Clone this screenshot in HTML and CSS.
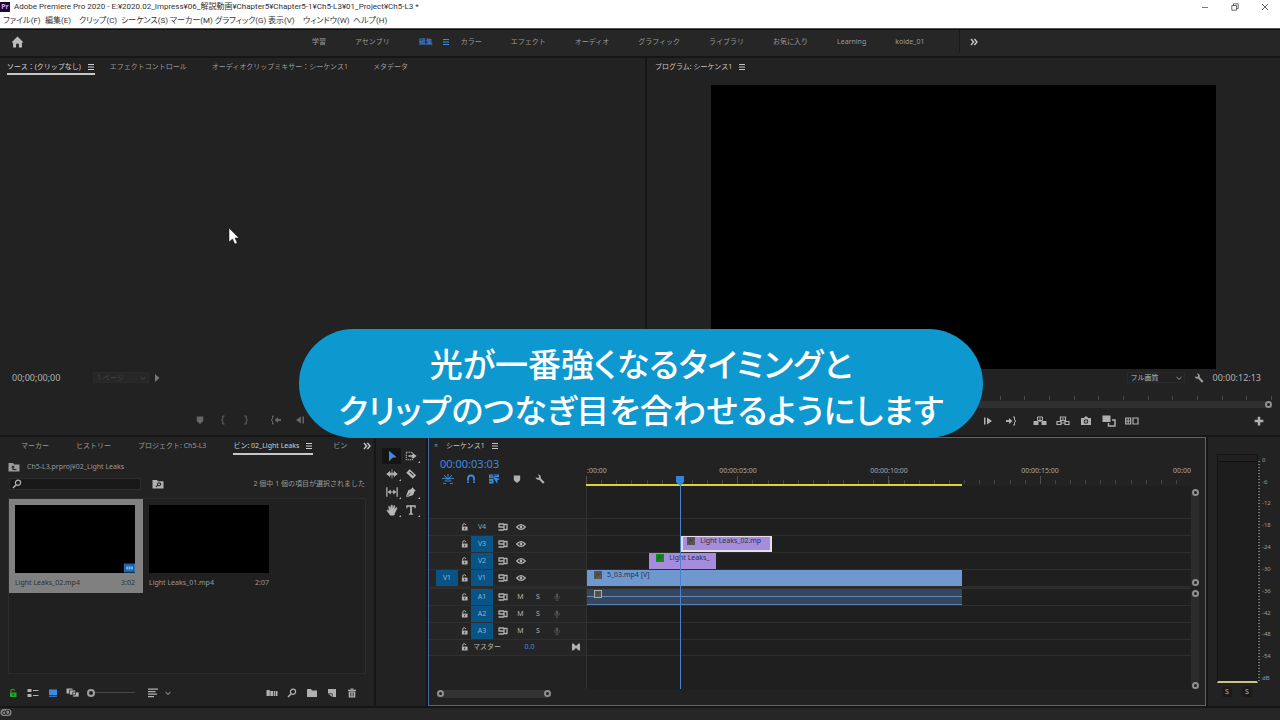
FILE: index.html
```html
<!DOCTYPE html>
<html lang="ja">
<head>
<meta charset="utf-8">
<title>Adobe Premiere Pro 2020</title>
<link rel="stylesheet" href="styles.css">
</head>
<body>
<svg class="sprite" aria-hidden="true">
  <symbol id="menu" viewBox="0 0 8 8"><path d="M1 1.500h6M1 4h6M1 6.500h6" stroke="currentColor" stroke-width="1.100"/></symbol>
  <symbol id="more" viewBox="0 0 8 8"><path d="M1 1l2.600 3L1 7M4.400 1L7 4 4.400 7" fill="none" stroke="currentColor" stroke-width="1.400"/></symbol>
  <symbol id="chevron" viewBox="0 0 8 8"><path d="M1.500 3L4 5.400 6.500 3" fill="none" stroke="currentColor"/></symbol>
  <symbol id="home" viewBox="0 0 14 12"><path d="M7 0L0.500 6.500h1.700V12h3.300V8h3v4h3.300V6.500h1.700z" fill="currentColor"/></symbol>
  <symbol id="wrench" viewBox="0 0 12 12"><path d="M.8 3.800a3.400 3.400 0 0 0 4.200 3l4.600 4.900 1.900-1.900-4.700-4.600A3.400 3.400 0 0 0 3.200.6l1.700 2.200-.3 1.500-1.600.4z" fill="currentColor"/></symbol>
  <symbol id="marker" viewBox="0 0 10 10"><path d="M1.800 1.500h6.400v4.700L5 9 1.800 6.200z" fill="currentColor"/></symbol>
  <symbol id="brace-l" viewBox="0 0 10 10"><path d="M6.500 1H4.800v3L3.300 5l1.500 1v3h1.700" fill="none" stroke="currentColor"/></symbol>
  <symbol id="brace-r" viewBox="0 0 10 10"><path d="M3.500 1h1.700v3l1.500 1-1.500 1v3H3.500" fill="none" stroke="currentColor"/></symbol>
  <symbol id="goto-in" viewBox="0 0 12 10"><path d="M4 1H2.500v3L1 5l1.500 1v3H4" fill="none" stroke="currentColor"/><path d="M4.500 5L8 2v2h3v2H8v2z" fill="currentColor"/></symbol>
  <symbol id="goto-out" viewBox="0 0 12 10"><path d="M8 1h1.500v3L11 5 9.500 6v3H8" fill="none" stroke="currentColor"/><path d="M7.500 5L4 2v2H1v2h3v2z" fill="currentColor"/></symbol>
  <symbol id="step-back" viewBox="0 0 10 10"><path d="M1 5l5-3.500v7zM7.500 1.500H9v7H7.500z" fill="currentColor"/></symbol>
  <symbol id="step-fwd" viewBox="0 0 10 10"><path d="M9 5L4 1.500v7zM1 1.500h1.500v7H1z" fill="currentColor"/></symbol>
  <symbol id="lift" viewBox="0 0 14 10"><path d="M.5 5h5v4h-5zM8.500 5h5v4h-5z" fill="currentColor"/><path d="M4.500 1h5v3.500h-5z" fill="none" stroke="currentColor"/><path d="M7 2v4M5.500 5h3" stroke="currentColor"/></symbol>
  <symbol id="extract" viewBox="0 0 14 10"><path d="M1 5.500h4v3H1zM9 5.500h4v3H9zM4.500 1h5v3.500h-5z" fill="none" stroke="currentColor" stroke-width="1.200"/><path d="M5 7h4M7 2v3" stroke="currentColor"/></symbol>
  <symbol id="camera" viewBox="0 0 12 10"><path fill-rule="evenodd" d="M1 2h3l1-1.500h2L8 2h3v7H1zM6 3.200a2.300 2.300 0 1 0 0 4.600 2.300 2.300 0 0 0 0-4.600z" fill="currentColor"/><circle cx="6" cy="5.500" r="1.200" fill="currentColor"/></symbol>
  <symbol id="compare" viewBox="0 0 14 12"><path d="M.5.500h8v6.500h-8z" fill="currentColor"/><path d="M6.500 8v3H13V5h-3" fill="none" stroke="currentColor" stroke-width="1.500"/></symbol>
  <symbol id="proxy" viewBox="0 0 14 8"><path d="M.7 1h5v6h-5zM8 1h5v6H8z" fill="none" stroke="currentColor" stroke-width="1.200"/><path d="M3.200 1v6M.7 4h5" stroke="currentColor"/></symbol>
  <symbol id="plus" viewBox="0 0 8 8"><path d="M4 .5v7M.5 4h7" stroke="currentColor" stroke-width="2"/></symbol>
  <symbol id="folder" viewBox="0 0 12 10"><path d="M1 1h4l1 1.500h5V9H1z" fill="currentColor"/></symbol>
  <symbol id="folder-up" viewBox="0 0 12 10"><path fill-rule="evenodd" d="M.5 1h4.500l1 1.500h5.500V9.500H.5zM5 3.500L3 5.500h1.400v2.500h4V7H5.600V5.500H7z" fill="currentColor"/></symbol>
  <symbol id="folder-find" viewBox="0 0 12 10"><path fill-rule="evenodd" d="M.5 1h4.500l1 1.200h5.500V9.500H.5zM7 3.200a2 2 0 0 0-1.800 2.700L3.500 7.600l.8.700L6 6.800a2 2 0 1 0 1-3.600zM7 4.200a1 1 0 1 1 0 2 1 1 0 0 1 0-2z" fill="currentColor"/></symbol>
  <symbol id="search" viewBox="0 0 10 10"><circle cx="6" cy="3.800" r="2.600" fill="none" stroke="currentColor" stroke-width="1.200"/><path d="M4.200 5.700L1 9" stroke="currentColor" stroke-width="1.500"/></symbol>
  <symbol id="lock" viewBox="0 0 8 9"><path d="M1 4h6.500v4.500H1z" fill="currentColor"/><path d="M2 4V2.200q0-1.400 1.700-1.400T5.500 2.200" fill="none" stroke="currentColor" stroke-width="1.100"/><path d="M4.200 5.200v2" stroke="#222"/></symbol>
  <symbol id="list" viewBox="0 0 12 10"><path d="M.5 1h4v3h-4zM.5 6h4v3h-4z" fill="currentColor"/><path d="M6 2.500h5.500M6 7.500h5.500" stroke="currentColor"/></symbol>
  <symbol id="iconview" viewBox="0 0 10 10"><path d="M1 1.500h8v5.500H1zM1 7.800h8v.9H1z" fill="currentColor"/></symbol>
  <symbol id="freeform" viewBox="0 0 14 10"><path d="M.5.500h6v5h-6z" fill="currentColor"/><path d="M3.500 2h6v5h-6zM6.800 4H13v5H6.800z" fill="currentColor" stroke="#222" stroke-width=".7"/></symbol>
  <symbol id="sort" viewBox="0 0 12 10"><path d="M1 1.200h10M1 3.700h7.500M1 6.200h9M1 8.700h6" stroke="currentColor" stroke-width="1.300"/></symbol>
  <symbol id="automate" viewBox="0 0 12 8"><path d="M.5 1h3.300v6H.5zM4.300 2h3v5h-3zM8 2h1.400v5H8zM10 2h1.500v5H10z" fill="currentColor"/></symbol>
  <symbol id="newitem" viewBox="0 0 10 10"><path d="M1 1h8v8H5.500V5.500H1z" fill="currentColor"/><path d="M1.800 6.200h3v2.600z" fill="currentColor"/></symbol>
  <symbol id="trash" viewBox="0 0 10 10"><path d="M1 1.800h8v1.200H1zM3.500.5h3v1h-3z" fill="currentColor"/><path d="M1.700 3.500h6.600v6H1.700z" fill="currentColor"/><path d="M3.500 4.500v4M5 4.500v4M6.500 4.500v4" stroke="#222" stroke-width=".6"/></symbol>
  <symbol id="t-select" viewBox="0 0 14 14"><path d="M3.500 1l9 7.500-5 .5-4 4.500z" fill="currentColor"/></symbol>
  <symbol id="t-track" viewBox="0 0 14 14"><path d="M1.500 2.500h7v9h-7z" fill="none" stroke="currentColor" stroke-width="1.200" stroke-dasharray="1.500 1"/><path d="M4 6h5V3.500L13.500 7 9 10.500V8H4z" fill="currentColor"/></symbol>
  <symbol id="t-ripple" viewBox="0 0 14 14"><path d="M7 1.500v11M.8 7L4.500 4v2h5V4l3.700 3-3.700 3V8h-5v2z" fill="currentColor" stroke="currentColor" stroke-width=".8"/></symbol>
  <symbol id="t-razor" viewBox="0 0 14 14"><path fill-rule="evenodd" d="M5.500 1.500L13 8.500 9 12.500 1.500 5.500zM5 5l4.500 4 .8-.8L5.800 4.200z" fill="currentColor"/></symbol>
  <symbol id="t-slip" viewBox="0 0 14 14"><path d="M1 1.500v11M13 1.500v11M3 7h8" stroke="currentColor" stroke-width="1.400"/><path d="M2 7l3.500-3v6zM12 7L8.500 4v6z" fill="currentColor"/></symbol>
  <symbol id="t-pen" viewBox="0 0 14 14"><path d="M8.500 1.500l4 4-1.500 1-1.500 4L2 13l-.8-1L3.800 5l3.500-1.500z" fill="currentColor"/><path d="M2 12.500L6.500 8" stroke="#222" stroke-width=".9"/></symbol>
  <symbol id="t-hand" viewBox="0 0 14 14"><path d="M5 13L1 7.500q.5-1 1.500-.3L4 8.500 3 3q1-1 1.500.2L5.500 6 6 1.500q1-1 1.500.1L7.700 6l1.500-4q1-.7 1.300.4L9.700 6.500 12 4.200q1-.2.9.7L10.500 10 9.500 13z" fill="currentColor" stroke="currentColor" stroke-width=".6"/></symbol>
  <symbol id="t-type" viewBox="0 0 14 14"><path d="M1.500 1.500h11v3.500h-1.400V3.300H8V11h1.500v1.500h-5V11H6V3.300H2.900V5H1.500z" fill="currentColor"/></symbol>
  <symbol id="nest" viewBox="0 0 12 10"><path d="M6 0v3M2 1l2.500 3M10 1L7.500 4M0 4.500h12M2.500 7h7M1 9.500h3M8 9.500h3M4 2.500l4 4M8 2.500l-4 4" stroke="currentColor" stroke-width=".9"/></symbol>
  <symbol id="magnet" viewBox="0 0 10 10"><path d="M2 9V4.500q0-3 3-3t3 3V9" fill="none" stroke="currentColor" stroke-width="1.800"/><path d="M.8 7h2.600M6.600 7h2.600" stroke="#222" stroke-width=".7"/></symbol>
  <symbol id="linked" viewBox="0 0 12 10"><path d="M1 .5h4.500v3.700H1zM6 .5h5v2.800H6zM1 5h4.500v4.500H1z" fill="currentColor"/><path d="M5 3l7 2-2.700 1.200V10z" fill="currentColor"/><path d="M1 7.300h3M2 2.300l7-1" stroke="#222" stroke-width=".6"/></symbol>
  <symbol id="sync" viewBox="0 0 10 8"><path d="M.5 1h5.500M.5 4h5.500M.5 7h5.500M1 1v3M6 1v6" stroke="currentColor" stroke-width="1.300" fill="none"/><path d="M6 1.500h3v5H6" fill="none" stroke="currentColor" stroke-width="1.300"/></symbol>
  <symbol id="eye" viewBox="0 0 10 8"><path d="M.7 4Q5-.8 9.300 4 5 8.800.7 4z" fill="none" stroke="currentColor" stroke-width="1.300"/><circle cx="5" cy="4" r="1.400" fill="currentColor"/></symbol>
  <symbol id="mic" viewBox="0 0 8 10"><rect x="2.500" y=".5" width="3" height="5.500" rx="1.500" fill="currentColor"/><path d="M1 4v1q0 2.500 3 2.500T7 5V4M4 7.500v2M2.500 9.500h3" fill="none" stroke="currentColor"/></symbol>
  <symbol id="bow" viewBox="0 0 8 8"><path d="M0 .5h1.300L4 3l2.700-2.500H8v7H6.700L4 5 1.300 7.500H0z" fill="currentColor"/></symbol>
  <symbol id="fx" viewBox="0 0 8 8"><path d="M0 0h8v8H0z" fill="currentColor"/><path d="M1.500 6.500l2-5 1 3 2-3" fill="none" stroke="#292e33" stroke-width=".8" opacity=".65"/></symbol>
  <symbol id="cloud" viewBox="0 0 12 8"><rect x=".5" y=".5" width="11" height="7" rx="3.500" fill="#888"/><circle cx="4.300" cy="4.300" r="1.800" fill="none" stroke="#222"/><circle cx="7.700" cy="3.700" r="2.200" fill="none" stroke="#222"/></symbol>
</svg>

<div class="app">
  <header class="window-head">
    <div class="titlebar">
      <span class="logo">Pr</span>
      <h1>Adobe Premiere Pro 2020 - E:¥2020.02_Impress¥06_解説動画¥Chapter5¥Chapter5-1¥Ch5-L3¥01_Project¥Ch5-L3 *</h1>
      <div class="window-buttons">
        <button aria-label="最小化"><svg viewBox="0 0 8 8"><path d="M1 4.500h6" stroke="#555" stroke-width=".8"/></svg></button>
        <button aria-label="元に戻す"><svg viewBox="0 0 8 8"><path d="M.8 2.500h4.700v4.700H.8zM2.500 2.500V.8h4.700v4.700H5.500" fill="none" stroke="#444" stroke-width=".8"/></svg></button>
        <button aria-label="閉じる"><svg viewBox="0 0 8 8"><path d="M1 1l6 6M7 1L1 7" stroke="#444" stroke-width=".8"/></svg></button>
      </div>
    </div>
    <nav class="menubar">
      <button>ファイル(F)</button><button>編集(E)</button><button>クリップ(C)</button><button>シーケンス(S)</button><button>マーカー(M)</button><button>グラフィック(G)</button><button>表示(V)</button><button>ウィンドウ(W)</button><button>ヘルプ(H)</button>
    </nav>
  </header>

  <nav class="workspaces">
    <button class="home" aria-label="ホーム"><svg><use href="#home"/></svg></button>
    <div class="workspace-list">
      <button>学習</button><button>アセンブリ</button>
      <button class="current">編集<svg class="i8"><use href="#menu"/></svg></button>
      <button>カラー</button><button>エフェクト</button><button>オーディオ</button><button>グラフィック</button><button>ライブラリ</button><button>お気に入り</button><button>Learning</button><button>koide_01</button>
    </div>
    <button class="overflow" aria-label="その他"><svg class="i8"><use href="#more"/></svg></button>
  </nav>

  <main class="upper">
    <section class="panel source">
      <div class="tabs source-tabs">
        <button class="tab active">ソース：(クリップなし)<svg class="i8"><use href="#menu"/></svg></button>
        <button class="tab">エフェクトコントロール</button>
        <button class="tab">オーディオクリップミキサー：シーケンス1</button>
        <button class="tab">メタデータ</button>
      </div>
      <div class="source-view"></div>
      <div class="monitor-info">
        <span class="timecode">00;00;00;00</span>
        <span class="select dim"><select aria-label="ページ" disabled><option>1 ページ</option></select><svg class="i8"><use href="#chevron"/></svg></span>
        <button class="next" aria-label="次のページ"><svg class="i8" viewBox="0 0 8 8"><path d="M2 0l4.500 4L2 8z" fill="#777"/></svg></button>
      </div>
      <div class="transport source-transport">
        <button aria-label="マーカーを追加"><svg class="i10"><use href="#marker"/></svg></button>
        <button aria-label="インをマーク"><svg class="i10"><use href="#brace-l"/></svg></button>
        <button aria-label="アウトをマーク"><svg class="i10"><use href="#brace-r"/></svg></button>
        <button class="wide" aria-label="インへ移動"><svg class="i12"><use href="#goto-in"/></svg></button>
        <button class="narrow" aria-label="前のフレーム"><svg class="i10"><use href="#step-back"/></svg></button>
      </div>
    </section>

    <section class="panel program">
      <div class="tabs program-tabs">
        <button class="tab lit">プログラム: シーケンス1<svg class="i8"><use href="#menu"/></svg></button>
      </div>
      <div class="screen"></div>
      <div class="monitor-info program-info">
        <span class="select"><select aria-label="再生時の解像度"><option>フル画質</option></select><svg class="i8"><use href="#chevron"/></svg></span>
        <button aria-label="設定"><svg class="i12"><use href="#wrench"/></svg></button>
        <span class="timecode">00:00:12:13</span>
      </div>
      <div class="mini-ruler"></div>
      <div class="mini-scroll"><span class="knob"></span></div>
      <div class="transport program-transport">
        <button aria-label="次のフレーム"><svg class="i10"><use href="#step-fwd"/></svg></button>
        <button aria-label="アウトへ移動"><svg class="i12"><use href="#goto-out"/></svg></button>
        <button class="spaced" aria-label="リフト"><svg class="i14"><use href="#lift"/></svg></button>
        <button aria-label="抽出"><svg class="i14"><use href="#extract"/></svg></button>
        <button aria-label="フレームを書き出し"><svg class="i12"><use href="#camera"/></svg></button>
        <button aria-label="比較表示"><svg class="i14"><use href="#compare"/></svg></button>
        <button aria-label="プロキシ"><svg class="i14"><use href="#proxy"/></svg></button>
        <button class="add" aria-label="ボタンエディター"><svg class="i10"><use href="#plus"/></svg></button>
      </div>
    </section>
  </main>

  <div class="lower">
    <section class="panel bin">
      <div class="tabs bin-tabs">
        <button class="tab">マーカー</button>
        <button class="tab">ヒストリー</button>
        <button class="tab">プロジェクト: Ch5-L3</button>
        <button class="tab active">ビン: 02_Light Leaks<svg class="i8"><use href="#menu"/></svg></button>
        <button class="tab last">ビン</button>
        <button class="overflow" aria-label="その他"><svg class="i8"><use href="#more"/></svg></button>
      </div>
      <div class="crumb"><svg class="i12"><use href="#folder-up"/></svg>Ch5-L3.prproj¥02_Light Leaks</div>
      <div class="search-row">
        <label class="search"><svg class="i10"><use href="#search"/></svg><input type="text" aria-label="ビンを検索"></label>
        <button aria-label="検索ビンを作成"><svg class="i12"><use href="#folder-find"/></svg></button>
        <span class="count">2 個中 1 個の項目が選択されました</span>
      </div>
      <div class="bin-list">
        <article class="card selected">
          <div class="thumb"><span class="badge"><svg viewBox="0 0 10 8"><path d="M0 0h10v8H0z" fill="#2e76bd"/><path d="M1.500 1v6M8.500 1v6M1 1h8M1 7h8" stroke="#174a80" stroke-width=".7"/><path d="M2 2.800h1.500v2.400H2zM4.300 2.800h1.500v2.400H4.300zM6.600 2.800h1.500v2.400H6.600z" fill="#7dbcf2"/></svg></span></div>
          <div class="caption"><span>Light Leaks_02.mp4</span><span>3:02</span></div>
        </article>
        <article class="card">
          <div class="thumb"></div>
          <div class="caption"><span>Light Leaks_01.mp4</span><span>2:07</span></div>
        </article>
      </div>
      <div class="bin-tools">
        <button class="green" aria-label="書き込み可能"><svg class="i10"><use href="#lock"/></svg></button>
        <button aria-label="リスト表示"><svg class="i12"><use href="#list"/></svg></button>
        <button class="blue" aria-label="アイコン表示"><svg class="i10"><use href="#iconview"/></svg></button>
        <button aria-label="フリーフォーム表示"><svg class="i14"><use href="#freeform"/></svg></button>
        <input type="range" min="0" max="100" value="0" aria-label="アイコンのサイズ">
        <button aria-label="並べ替え"><svg class="i12"><use href="#sort"/></svg></button>
        <button class="small" aria-label="並べ替えメニュー"><svg class="i8"><use href="#chevron"/></svg></button>
        <span class="fill"></span>
        <button aria-label="シーケンスへオート編成"><svg class="i12"><use href="#automate"/></svg></button>
        <button aria-label="検索"><svg class="i10"><use href="#search"/></svg></button>
        <button aria-label="新規ビン"><svg class="i12"><use href="#folder"/></svg></button>
        <button aria-label="新規項目"><svg class="i10"><use href="#newitem"/></svg></button>
        <button aria-label="消去"><svg class="i10"><use href="#trash"/></svg></button>
      </div>
    </section>

    <section class="panel tools">
      <button class="on" aria-label="選択ツール"><svg class="i14"><use href="#t-select"/></svg></button>
      <button class="multi" aria-label="トラックの前方選択ツール"><svg class="i14"><use href="#t-track"/></svg></button>
      <button class="multi" aria-label="リップルツール"><svg class="i14"><use href="#t-ripple"/></svg></button>
      <button aria-label="レーザーツール"><svg class="i14"><use href="#t-razor"/></svg></button>
      <button class="multi" aria-label="スリップツール"><svg class="i14"><use href="#t-slip"/></svg></button>
      <button class="multi" aria-label="ペンツール"><svg class="i14"><use href="#t-pen"/></svg></button>
      <button class="multi" aria-label="手のひらツール"><svg class="i14"><use href="#t-hand"/></svg></button>
      <button class="multi" aria-label="文字ツール"><svg class="i14"><use href="#t-type"/></svg></button>
    </section>

    <section class="panel timeline">
      <div class="tl-top">
        <div class="tl-head">
          <div class="seq-tab"><button class="close" aria-label="閉じる">×</button><button class="tab lit">シーケンス1<svg class="i8"><use href="#menu"/></svg></button></div>
          <div class="position">00:00:03:03</div>
          <div class="tl-options">
            <button class="blue" aria-label="ネスト"><svg class="i12"><use href="#nest"/></svg></button>
            <button class="blue" aria-label="スナップ"><svg class="i10"><use href="#magnet"/></svg></button>
            <button class="blue" aria-label="リンクされた選択"><svg class="i12"><use href="#linked"/></svg></button>
            <button aria-label="マーカーを追加"><svg class="i10"><use href="#marker"/></svg></button>
            <button aria-label="表示設定"><svg class="i12"><use href="#wrench"/></svg></button>
          </div>
        </div>
        <div class="ruler">
          <div class="ruler-labels"><span>:00:00</span><span>00:00:05:00</span><span>00:00:10:00</span><span>00:00:15:00</span><span>00:00</span></div>
          <div class="ticks"></div>
          <div class="render-bar"><span style="width:62.1%"></span></div>
        </div>
      </div>
      <div class="tl-body">
        <div class="tracks">
          <div class="track blank"><div class="track-head"></div><div class="lane"></div></div>
          <div class="track"><div class="track-head"><i></i><svg class="lk"><use href="#lock"/></svg><button class="target off">V4</button><svg class="i10"><use href="#sync"/></svg><svg class="i10"><use href="#eye"/></svg></div><div class="lane"></div></div>
          <div class="track"><div class="track-head"><i></i><svg class="lk"><use href="#lock"/></svg><button class="target">V3</button><svg class="i10"><use href="#sync"/></svg><svg class="i10"><use href="#eye"/></svg></div><div class="lane"><div class="clip violet picked" style="margin-left:15.6%;width:15.1%"><svg class="i8"><use href="#fx"/></svg><span>Light Leaks_02.mp</span></div></div></div>
          <div class="track"><div class="track-head"><i></i><svg class="lk"><use href="#lock"/></svg><button class="target">V2</button><svg class="i10"><use href="#sync"/></svg><svg class="i10"><use href="#eye"/></svg></div><div class="lane"><div class="clip violet" style="margin-left:10.3%;width:11.1%"><svg class="i8 fx-green"><use href="#fx"/></svg><span>Light Leaks_</span></div></div></div>
          <div class="track"><div class="track-head"><button class="target">V1</button><svg class="lk"><use href="#lock"/></svg><button class="target">V1</button><svg class="i10"><use href="#sync"/></svg><svg class="i10"><use href="#eye"/></svg></div><div class="lane"><div class="clip azure" style="width:62.1%"><svg class="i8"><use href="#fx"/></svg><span>5_03.mp4 [V]</span></div></div></div>
          <div class="divider"></div>
          <div class="track"><div class="track-head"><i></i><svg class="lk"><use href="#lock"/></svg><button class="target">A1</button><svg class="i10"><use href="#sync"/></svg><button>M</button><button>S</button><svg class="i10 mic"><use href="#mic"/></svg></div><div class="lane"><div class="clip audio" style="width:62.1%"><svg class="i8"><use href="#fx"/></svg></div></div></div>
          <div class="track"><div class="track-head"><i></i><svg class="lk"><use href="#lock"/></svg><button class="target">A2</button><svg class="i10"><use href="#sync"/></svg><button>M</button><button>S</button><svg class="i10 mic"><use href="#mic"/></svg></div><div class="lane"></div></div>
          <div class="track"><div class="track-head"><i></i><svg class="lk"><use href="#lock"/></svg><button class="target">A3</button><svg class="i10"><use href="#sync"/></svg><button>M</button><button>S</button><svg class="i10 mic"><use href="#mic"/></svg></div><div class="lane"></div></div>
          <div class="track master-track"><div class="track-head"><i></i><svg class="lk"><use href="#lock"/></svg><span class="master">マスター</span><span class="level">0.0</span><svg class="i8 bow"><use href="#bow"/></svg></div><div class="lane"></div></div>
          <div class="track rest"><div class="track-head"></div><div class="lane"></div></div>
        </div>
        <div class="vbars">
          <div class="vbar video"><span class="knob"></span><span class="knob"></span></div>
          <div class="vbar"><span class="knob"></span><span class="knob"></span></div>
        </div>
      </div>
      <div class="tl-foot"><div class="hthumb"><span class="knob"></span><span class="knob"></span></div></div>
      <div class="playhead"><svg viewBox="0 0 8 9"><path d="M0 0h8v6L5 9H3L0 6z" fill="#2f86dc"/></svg></div>
    </section>

    <section class="panel meters">
      <div class="meter-main">
        <div class="meter"></div>
        <div class="dots"></div>
        <div class="scale"><span>0</span><span>-6</span><span>-12</span><span>-18</span><span>-24</span><span>-30</span><span>-36</span><span>-42</span><span>-48</span><span>-54</span><span>dB</span></div>
      </div>
      <div class="solo"><button>S</button><button>S</button></div>
    </section>
  </div>

  <footer class="status"><svg><use href="#cloud"/></svg></footer>

  <div class="subtitle"><p>光が一番強くなるタイミングと<br>クリップのつなぎ目を合わせるようにします</p></div>
  <svg class="cursor" viewBox="0 0 12 18"><path d="M1 1v14l3.500-3 2.300 5 2.500-1-2.300-5H11z" fill="#fff" stroke="#111" stroke-width=".5"/></svg>
</div>
</body>
</html>
```
FILE: styles.css
```css
* { box-sizing: border-box; }
body {
  margin: 0;
  background: #161616;
  color: #9a9a9a;
  font: 7px/10px "Noto Sans", "Noto Sans CJK JP", sans-serif;
  overflow: hidden;
}
button, input, select { font: inherit; color: inherit; background: none; border: 0; padding: 0; margin: 0; }
button { display: inline-flex; align-items: center; justify-content: center; white-space: nowrap; }
svg { display: block; flex: none; }
.sprite { position: absolute; width: 0; height: 0; }
.i8 { width: 8px; height: 8px; }
.i10 { width: 10px; height: 10px; }
.i12 { width: 12px; height: 10px; }
.i14 { width: 14px; height: 12px; }
.blue { color: #3c8be0; }

.app {
  position: relative;
  display: grid;
  grid-template-rows: auto auto minmax(0, 378fr) minmax(0, 270fr) 12px;
  row-gap: 2px;
  height: 100vh;
}

/* window frame */
.window-head { background: #fff; color: #333; border-bottom: 1px solid #555; margin-bottom: -2px; }
.titlebar { display: flex; align-items: center; height: 14px; }
.logo { width: 10px; height: 10px; background: #1d0634; color: #d9a8ff; font-weight: 700; line-height: 10px; text-align: center; }
h1 { flex: 1; margin: 0 0 0 4px; font-family: Roboto, "Noto Sans CJK JP", sans-serif; font-size: 8px; font-weight: 400; line-height: 12px; white-space: nowrap; }
.window-buttons { display: flex; gap: 22px; padding-right: 11px; }
.window-buttons svg { width: 8px; height: 8px; }
.menubar { display: grid; grid-template-columns: 42px 34px 42px 49px 45px 53px 35px 50px 40px; height: 14px; padding-left: 3px; font-feature-settings: "palt"; }
.menubar button { justify-content: flex-start; font-size: 8px; font-family: Roboto, "Noto Sans CJK JP", sans-serif; }

.workspaces { display: flex; align-items: center; height: 27px; padding-bottom: 3px; background: #262626; border-top: 1px solid #0c0c0c; }
.home { width: 35px; color: #bdbdbd; }
.home svg { width: 13px; height: 12px; }
.workspace-list { display: flex; flex: none; gap: 29px; width: 925px; padding-left: 277px; height: 23px; border-right: 1px solid #1a1a1a; }
.workspace-list .current { gap: 9px; color: #3c8be0; margin-right: -18px; }
.overflow { color: #c8c8c8; }
.workspaces .overflow { margin-left: 10px; }

/* panels */
.panel { background: #222; min-width: 0; min-height: 0; }
.upper { display: grid; grid-template-columns: 645fr 633fr; gap: 2px; min-height: 0; }
.source, .program { display: flex; flex-direction: column; }
.tabs { display: flex; flex: none; height: 18px; }
.tab { height: 17px; padding-top: 2px; gap: 6px; border-bottom: 2px solid transparent; }
.tab.active { color: #d0d0d0; border-color: #c8c8c8; }
.tab.lit { color: #c4c4c4; }
.source-tabs { gap: 25px; padding-left: 7px; }
.source-tabs .active { margin-right: -10px; }
.program-tabs { padding-left: 8px; }
.source-view { flex: 1; }
.monitor-info { display: flex; align-items: center; flex: none; height: 18px; }
.timecode { font-size: 9px; color: #b0b0b0; }
.source .monitor-info { padding-left: 12px; gap: 4px; }
.source .timecode { width: 77px; }
.select { display: flex; align-items: center; width: 56px; height: 11px; border: 1px solid #2a2a2a; }
.select select { flex: 1; min-width: 0; height: 9px; padding-left: 3px; appearance: none; color: #bdbdbd; }
.select svg { margin-right: 1px; color: #999; }
.select.dim { background: #272727; }
.select.dim select, .select.dim svg { color: #444; opacity: 1; }
.transport { display: flex; align-items: center; flex: none; height: 30px; color: #b0b0b0; }
.transport button { width: 23px; height: 14px; }
.source-transport { margin-top: 18px; padding-left: 188px; color: #666; }
.source-transport .wide { width: 38px; }
.source-transport .narrow { width: 10px; }
.screen { flex: 1; margin: 9px 64px 0; background: #000; }
.program-info { justify-content: flex-end; gap: 8px; padding-right: 19px; }
.program-info .select { width: 58px; }
.mini-ruler { flex: none; height: 9px; margin: 4px 8px 0; background: repeating-linear-gradient(to left, #484848 0 1px, transparent 1px 4%) bottom / 100% 4px no-repeat; }
.mini-scroll { display: flex; justify-content: flex-end; height: 7px; margin: 1px 8px 0; background: #303030; }
.knob { width: 7px; height: 7px; flex: none; border: 2px solid #909090; border-radius: 50%; background: #222; }
.program-transport { height: 27px; padding: 0 11px 0 329px; }
.program-transport .spaced { margin-left: 6px; }
.program-transport .add { width: 20px; margin-left: auto; }

.lower { display: grid; grid-template-columns: 374px 50px minmax(0, 1fr) 72px; gap: 2px; min-height: 0; }
.bin { display: flex; flex-direction: column; }
.bin-tabs { gap: 27px; height: 19px; padding-top: 1px; padding-left: 21px; }
.bin-tabs .overflow { height: 17px; margin: 0 3px 0 auto; }
.bin-tabs .active { margin-right: -7px; }
.bin-tabs .last { margin-right: -20px; }
.crumb { display: flex; align-items: center; gap: 7px; height: 22px; padding-left: 8px; }
.search-row { display: flex; align-items: center; height: 13px; padding: 0 9px; }
.search { display: flex; align-items: center; width: 132px; height: 12px; padding-left: 2px; background: #191919; border: 1px solid #2c2c2c; color: #b0b0b0; }
.search input { flex: 1; min-width: 0; height: 10px; }
.search-row button { margin-left: 11px; color: #b0b0b0; }
.count { margin-left: auto; }
.bin-list { display: flex; flex: 1; align-items: flex-start; margin: 7px 8px 0; border: 1px solid #2c2c2c; background: #202020; }
.card { width: 134px; padding: 6px 8px 4px 6px; }
.card.selected { background: #808080; color: #303030; }
.thumb { display: flex; align-items: flex-end; justify-content: flex-end; height: 68px; background: #000; }
.badge svg { width: 11px; height: 10px; }
.caption { display: flex; justify-content: space-between; padding-top: 4px; line-height: 12px; }
.bin-tools { display: flex; align-items: center; height: 32px; padding: 5px 12px 0 3px; color: #b0b0b0; }
.bin-tools button { width: 20px; height: 14px; }
.bin-tools .green { color: #25a52c; }
.bin-tools .green svg { width: 8px; }
.bin-tools .blue { color: #3c8be0; }
.bin-tools input { width: 48px; height: 8px; margin: 0 8px 0 4px; appearance: none; background: linear-gradient(#484848, #484848) center / 100% 1px no-repeat; }
.bin-tools input::-webkit-slider-thumb { appearance: none; width: 8px; height: 8px; border: 2px solid #a0a0a0; border-radius: 50%; background: #222; }
.bin-tools .small { width: 10px; }
.fill { flex: 1; }

.tools { display: grid; grid-template-columns: 19px 19px; grid-auto-rows: 16px; row-gap: 2px; align-content: start; padding: 11px 0 0 6px; color: #b8b8b8; }
.tools button { position: relative; }
.tools .on { background: #151515; color: #3c8be0; }
.tools .multi::after { content: ""; position: absolute; right: 0; bottom: 1px; border: 1px solid; border-top-color: transparent; border-left-color: transparent; }

/* timeline */
.timeline { position: relative; display: flex; flex-direction: column; border: 1px solid #4468a4; }
.tl-top { display: flex; flex: none; height: 48px; padding-right: 14px; }
.tl-head { flex: 0 0 157px; }
.seq-tab { display: flex; height: 17px; gap: 8px; padding-left: 5px; }
.seq-tab .tab { padding-top: 0; border-bottom: 0; }
.position { height: 18px; padding-left: 11px; color: #3c8be0; font-size: 11px; line-height: 18px; }
.tl-options { display: flex; align-items: center; height: 12px; padding-left: 7px; color: #b0b0b0; }
.tl-options button { width: 23px; height: 10px; }
.ruler { flex: 1; display: flex; flex-direction: column; justify-content: flex-end; }
.ruler-labels { display: grid; grid-template-columns: 1fr 2fr 2fr 2fr 1fr; padding-left: 1px; color: #a8a8a8; text-align: center; }
.ruler-labels span:first-child { text-align: left; }
.ruler-labels span:last-child { text-align: right; }
.ticks {
  height: 8px;
  background:
    repeating-linear-gradient(to right, #505050 0 1px, transparent 1px 25%) bottom / 100% 8px no-repeat,
    repeating-linear-gradient(to right, #454545 0 1px, transparent 1px 2.5%) bottom / 100% 4px no-repeat;
}
.render-bar { height: 2px; }
.render-bar span { display: block; height: 2px; background: #ddd42f; }
.tl-body { display: flex; flex: 1; min-height: 0; padding-right: 6px; }
.tracks { display: flex; flex: 1; flex-direction: column; }
.track { display: flex; height: 17px; border-top: 1px solid #2f2f2f; }
.track.blank { height: 32px; border: 0; }
.track.master-track { height: 16px; }
.track.rest { flex: 1; }
.divider { height: 2px; background: #2c2c2c; }
.track-head { display: grid; grid-template-columns: 22px 13px 22px 19px 17px 18px 19px; flex: 0 0 157px; align-items: center; justify-items: center; padding-left: 7px; color: #b0b0b0; background: #252525; }
.blank .track-head, .rest .track-head { background: #222; }
.lk { width: 7px; height: 8px; }
.track-head .i10 { height: 8px; }
.track-head .mic { color: #555; }
.target { width: 22px; height: 16px; background: #095487; color: #86b4d4; }
.target.off { background: none; color: #a0a0a0; }
.master { grid-column: 3 / 5; justify-self: start; padding-left: 2px; }
.level { color: #3c8be0; grid-column: 5 / 7; }
.bow { grid-column: 8; }
.lane { flex: 1; border-left: 1px solid #303030; background: #1f1f1f; }
.clip { display: flex; align-items: flex-start; gap: 5px; height: 16px; padding: 1px 0 0 7px; overflow: hidden; white-space: nowrap; color: #29344a; line-height: 8px; }
.clip svg { color: #565656; }
.clip .fx-green { color: #118a19; }
.violet { background: #a78bdc; }
.picked { padding: 0 0 0 4px; border: 2px solid #e4e0ea; border-top-width: 1px; }
.azure { background: #6f98cf; }
.audio { background: linear-gradient(transparent 7px, #6588bb 7px 8px, transparent 8px 15px, #5c80b4 15px) #34475f; }
.audio svg { border: 1px solid #aaa; }
.vbars { width: 8px; display: flex; flex-direction: column; gap: 4px; padding-top: 3px; }
.vbar { display: flex; flex: 1; flex-direction: column; align-items: center; justify-content: space-between; background: #2c2c2c; border-radius: 4px; }
.vbar.video { flex: 0 0 97px; }
.tl-foot { flex: none; height: 16px; padding: 1px 15px 0 8px; }
.hthumb { display: flex; justify-content: space-between; width: 114px; height: 8px; background: #333; border-radius: 4px; }
.playhead { position: absolute; top: 38px; bottom: 16px; left: calc(153px + (100% - 171px) * 0.156); width: 8px; background: linear-gradient(#4b82cc, #4b82cc) center / 1px 100% no-repeat; }
.playhead svg { width: 8px; height: 9px; }

/* audio meters */
.meters { display: flex; flex-direction: column; padding: 17px 0 5px 9px; }
.meter-main { display: flex; flex: 1; min-height: 0; }
.meter { width: 41px; background: #1d1d1d; border: 1px solid #141414; border-bottom: 2px solid #c9c585; box-shadow: inset 0 6px #202020, inset 0 7px #111; }
.dots { width: 3px; margin-top: 7px; background: repeating-linear-gradient(#777 0 1px, transparent 1px 3px) left / 2px 100% no-repeat; }
.scale { display: flex; flex-direction: column; justify-content: space-between; padding-top: 1px; margin-left: 1px; font-size: 6px; }
.solo { display: flex; gap: 10px; padding-left: 5px; height: 18px; align-items: center; }
.solo button { width: 10px; height: 10px; background: #1b1b1b; color: #b8b8b8; }

.status { background: #262626; }
.status svg { width: 12px; height: 9px; }

/* overlays */
.subtitle {
  position: absolute; top: 329px; left: 50%; transform: translateX(-341px);
  display: flex; align-items: center; justify-content: center;
  width: 684px; height: 109px; padding-top: 4px; border-radius: 55px; background: #0d99cf; color: #fff;
}
.subtitle p { margin: 0; font: 500 33px/46px "Noto Sans CJK JP", sans-serif; font-feature-settings: "palt"; text-align: center; white-space: nowrap; }
.cursor { position: absolute; top: 227px; left: 228px; width: 12px; height: 18px; }
```
